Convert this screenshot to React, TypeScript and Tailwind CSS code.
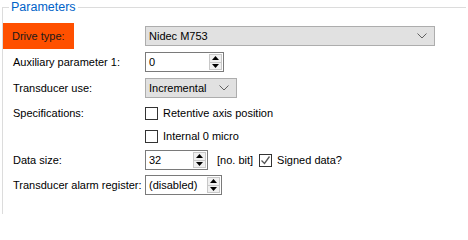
import React from "react";

const font = { fontFamily: '"Liberation Sans", Arial, sans-serif' };

const Chevron: React.FC = () => (
    <svg width="10" height="6" viewBox="0 0 10 6" className="shrink-0">
        <path d="M0.5 0.5 L5 5 L9.5 0.5" fill="none" stroke="#606060" strokeWidth="1" />
    </svg>
);

const Combo: React.FC<{ value: string; width: string }> = ({ value, width }) => (
    <div className={`${width} h-[20px] flex items-center justify-between bg-[#e1e1e1] border border-[#adadad] pl-[3px] pr-[7px]`}>
        <span>{value}</span>
        <Chevron />
    </div>
);

const SpinButtons: React.FC = () => (
    <div className="w-[13px] h-[16px] flex flex-col border border-[#c8c8c8] bg-[#f0f0f0] mr-[1px]">
        <div className="flex-1 flex items-center justify-center border-b border-[#c8c8c8]">
            <svg width="7" height="4" viewBox="0 0 7 4">
                <path d="M3.5 0 L7 4 L0 4 Z" fill="#000" />
            </svg>
        </div>
        <div className="flex-1 flex items-center justify-center">
            <svg width="7" height="4" viewBox="0 0 7 4">
                <path d="M0 0 L7 0 L3.5 4 Z" fill="#000" />
            </svg>
        </div>
    </div>
);

const Spin: React.FC<{ value: string; width: string }> = ({ value, width }) => (
    <div className={`${width} h-[20px] flex items-center justify-between bg-white border border-[#7a7a7a] pl-[3px]`}>
        <span>{value}</span>
        <SpinButtons />
    </div>
);

const Check: React.FC<{ label: string; checked?: boolean }> = ({ label, checked }) => (
    <div className="flex items-center gap-[5px]">
        <div className="w-[13px] h-[13px] border border-[#333333] bg-white flex items-center justify-center">
            {checked && (
                <svg width="11" height="11" viewBox="0 0 11 11">
                    <path d="M1.5 5.5 L4.5 8.5 L9.5 1.5" fill="none" stroke="#555" strokeWidth="1.3" />
                </svg>
            )}
        </div>
        <span>{label}</span>
    </div>
);

const Row: React.FC<{ label: string; h: string; children: React.ReactNode }> = ({ label, h, children }) => (
    <div className={`flex items-center ${h}`}>
        <div className="w-[142px] pl-[10px] shrink-0">{label}</div>
        {children}
    </div>
);

export default function App() {
    return (
        <div className="w-[468px] h-[214px] bg-white overflow-hidden text-[11px] text-black" style={font}>
            <div className="relative ml-[2px] mt-[7px] w-[464px] h-[220px] border-t border-l border-[#dcdcdc] pt-[15px]">
                <span className="absolute left-[6px] -top-[8px] bg-white px-[2px] text-[12.5px] text-[#0063c8] leading-[14px]">
                    Parameters
                </span>

                <div className="flex items-center h-[26px]">
                    <div className="w-[71px] h-[26px] bg-[#ff5000] flex items-center pl-[9px] text-[#1a1a1a]">Drive type:</div>
                    <div className="ml-[71px]">
                        <Combo value="Nidec M753" width="w-[290px]" />
                    </div>
                </div>

                <Row label="Auxiliary parameter 1:" h="h-[26px]">
                    <Spin value="0" width="w-[79px]" />
                </Row>

                <Row label="Transducer use:" h="h-[26px]">
                    <Combo value="Incremental" width="w-[92px]" />
                </Row>

                <Row label="Specifications:" h="h-[24px]">
                    <Check label="Retentive axis position" />
                </Row>

                <Row label="" h="h-[23px]">
                    <Check label="Internal 0 micro" />
                </Row>

                <Row label="Data size:" h="h-[24px]">
                    <Spin value="32" width="w-[63px]" />
                    <span className="ml-[9px]">[no. bit]</span>
                    <div className="ml-[6px]">
                        <Check label="Signed data?" checked />
                    </div>
                </Row>

                <Row label="Transducer alarm register:" h="h-[26px]">
                    <Spin value="(disabled)" width="w-[77px]" />
                </Row>
            </div>
        </div>
    );
}
